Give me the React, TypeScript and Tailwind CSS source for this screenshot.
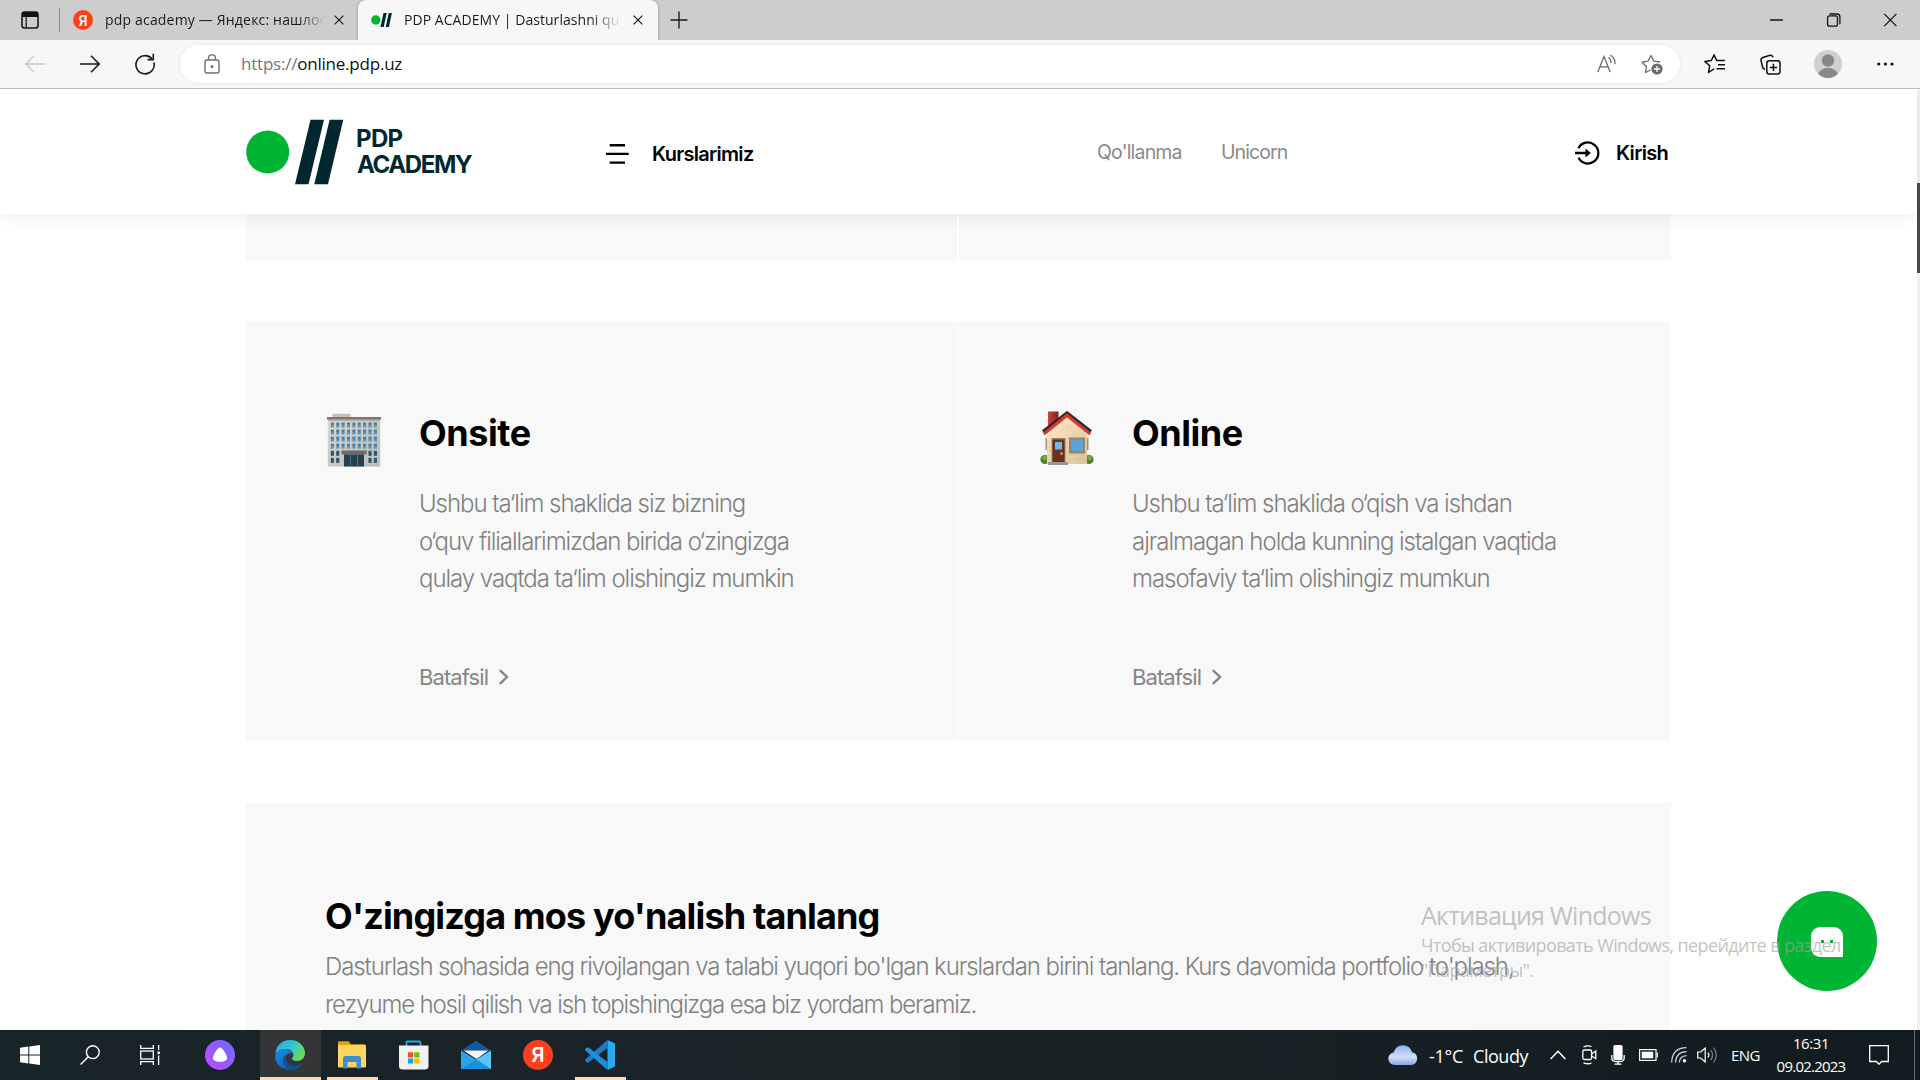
import React from "react";

const SEGOE = "font-['Open_Sans','Noto_Sans',sans-serif]";

function CloseIcon({ className = "" }: { className?: string }) {
  return (
    <svg viewBox="0 0 10 10" className={`h-[10px] w-[10px] shrink-0 ${className}`}>
      <path d="M.6.6 9.4 9.4M9.4.6.6 9.4" stroke="#1b1b1b" strokeWidth="1.2" fill="none" />
    </svg>
  );
}

function YandexIcon({ className }: { className: string }) {
  return (
    <span className={`flex shrink-0 items-center justify-center rounded-full bg-[#fc3f1d] font-['Inter',sans-serif] font-semibold text-white ${className}`}>
      Я
    </span>
  );
}

function TabBar() {
  return (
    <div className={`flex h-10 items-center bg-[#cdcdcd] text-[14px] text-[#1b1b1b] ${SEGOE}`}>
      <svg viewBox="0 0 18 18" className="ml-[21px] h-[18px] w-[18px] shrink-0">
        <rect x="1" y="1" width="16" height="16" rx="2.6" fill="none" stroke="#1b1b1b" strokeWidth="1.6" />
        <path d="M1 3.5Q1 1 3.500 1h11Q17 1 17 3.500V6H1z" fill="#111" />
        <path d="M5.200 6v11" stroke="#1b1b1b" strokeWidth="1.3" />
      </svg>
      <div className="ml-[20px] h-6 w-px shrink-0 bg-[#8a8a8a]" />
      <YandexIcon className="ml-[13px] h-5 w-5 text-[14px]" />
      <div className="mb-[2px] ml-[12px] w-[220px] overflow-hidden whitespace-nowrap tracking-[0.18px] [mask-image:linear-gradient(to_right,black_88%,transparent)]">
        pdp academy — Яндекс: нашлось
      </div>
      <CloseIcon className="ml-[9px]" />
      <div className="ml-[14px] flex h-10 w-[300px] shrink-0 items-center rounded-t-[8px] bg-[#f7f7f7] shadow-[0_0_3px_rgba(0,0,0,0.3)]">
        <svg viewBox="0 0 21 14" className="ml-[13px] h-[14px] w-[21px] shrink-0">
          <circle cx="4.800" cy="7" r="4.700" fill="#00b533" />
          <path d="M12.500 0h3.200l-3 14H9.500zM17.700 0h3.200l-3 14h-3.200z" fill="#00282e" />
        </svg>
        <div className="mb-[2px] ml-[12px] w-[217px] overflow-hidden whitespace-nowrap tracking-[0.05px] [mask-image:linear-gradient(to_right,black_86%,transparent)]">
          PDP ACADEMY | Dasturlashni qulay
        </div>
        <CloseIcon className="ml-[12px]" />
      </div>
      <svg viewBox="0 0 18 18" className="ml-[12px] h-[18px] w-[18px] shrink-0">
        <path d="M9 .5v17M.5 9h17" stroke="#1b1b1b" strokeWidth="1.400" />
      </svg>
      <svg viewBox="0 0 130 14" className="mr-[22px] ml-auto h-[14px] w-[128px] shrink-0" fill="none" stroke="#111" strokeWidth="1.300">
        <path d="M0 7h13M116 .8l12.400 12.400M128.400.8 116 13.200" />
        <rect x="58.500" y="2.800" width="10" height="10.400" rx="2" />
        <path d="M60.500.9h7.500q3 0 3 3v7.500" />
      </svg>
    </div>
  );
}

function Toolbar() {
  return (
    <div className={`relative flex h-[49px] items-center border-b border-[#bdbdbd] bg-[#f7f7f7] ${SEGOE}`}>
      <svg viewBox="0 0 20 18" className="ml-[25px] h-[18px] w-5 shrink-0" fill="none" stroke="#c9c9c9" strokeWidth="1.400">
        <path d="M20 9H1M9 .8.900 9 9 17.200" />
      </svg>
      <svg viewBox="0 0 20 18" className="ml-[35px] h-[18px] w-5 shrink-0" fill="none" stroke="#1b1b1b" strokeWidth="1.500">
        <path d="M0 9h19M11 .8 19.100 9 11 17.200" />
      </svg>
      <svg viewBox="0 0 20 22" className="ml-[35px] h-[22px] w-5 shrink-0" fill="none" stroke="#1b1b1b" strokeWidth="1.600">
        <path d="M18.900 9.500A9.100 9.100 0 1 1 16.800 5.600M18.300.8V6.600H12.500" />
      </svg>
      <div className="ml-[25px] flex h-[38px] w-[1500px] shrink-0 items-center rounded-full bg-white shadow-[0_0_4px_rgba(0,0,0,0.08)]">
        <svg viewBox="0 0 16 20" className="ml-[24px] h-5 w-4 shrink-0" fill="none" stroke="#6e6e6e" strokeWidth="1.400">
          <rect x="1" y="6" width="14" height="13" rx="2" />
          <path d="M4.500 6V4.200Q4.500.900 8 .900t3.500 3.300V6" />
          <circle cx="8" cy="12.500" r=".8" fill="#6e6e6e" />
        </svg>
        <div className="ml-[21px] text-[17px] tracking-[-0.22px] whitespace-nowrap text-[#111]">
          <span className="text-[#767676]">https://</span>online.pdp.uz
        </div>
        <svg viewBox="0 0 20 20" className="mr-[24px] ml-auto h-5 w-5 shrink-0" fill="none" stroke="#6b6b6b" strokeWidth="1.300">
          <path d="M.8 18 7 2.500 13.200 18M3 12.800h8M11.500 3.200q2.700 2 2.600 5.800M13.500 1q5 3.500 4.500 9" />
        </svg>
        <svg viewBox="0 0 22 22" className="mr-[17px] h-[22px] w-[22px] shrink-0" fill="none" stroke="#6b6b6b" strokeWidth="1.300" strokeLinejoin="round">
          <path d="M9.500 17 4.500 19.500l1-6L1 9.200l6-1L10 2.500l3 5.700 6 .8" />
          <circle cx="16" cy="16" r="5.600" fill="#6b6b6b" stroke="none" />
          <path d="M16 13v6M13 16h6" stroke="#fff" />
        </svg>
      </div>
      <svg viewBox="0 0 22 20" className="ml-[24px] h-5 w-[22px] shrink-0" fill="none" stroke="#111" strokeWidth="1.500" strokeLinejoin="round">
        <path d="M10 14.800 4.500 18.500l1.200-6.700L.9 7.400l6.400-.9L10.100.9l2.500 5.600h8.300M14 10.800h7M12.500 14.800H21" />
      </svg>
      <svg viewBox="0 0 21 21" className="ml-[34px] h-[21px] w-[21px] shrink-0" fill="none" stroke="#111" strokeWidth="1.500">
        <path d="M5 15.500Q3 15 2.600 13L1 6.500Q.6 4.200 2.800 3.500L10 1.300q2.300-.5 3 2" />
        <rect x="6.800" y="6.800" width="13.200" height="13.200" rx="2.600" />
        <path d="M13.400 9.800v7.200M9.800 13.400h7.200" />
      </svg>
      <svg viewBox="0 0 28 28" className="ml-[33px] h-7 w-7 shrink-0">
        <circle cx="14" cy="14" r="14" fill="#d2d0ce" />
        <circle cx="14" cy="10.500" r="6.200" fill="#8a8886" />
        <path d="M4 23.700Q7 18 14 18t10 5.700A14 14 0 0 1 4 23.700z" fill="#8a8886" />
      </svg>
      <svg viewBox="0 0 17 4" className="ml-[35px] h-1 w-[17px] shrink-0" fill="#111">
        <circle cx="1.800" cy="2" r="1.600" /><circle cx="8.400" cy="2" r="1.600" /><circle cx="15" cy="2" r="1.600" />
      </svg>
    </div>
  );
}

function SiteHeader() {
  return (
    <header className="relative z-10 flex h-[125px] w-[1917px] items-center bg-white pl-[246px] shadow-[0_4px_16px_rgba(0,0,0,0.06)]">
      <svg viewBox="0 0 98 66" className="h-[66px] w-[98px] shrink-0">
        <circle cx="21.700" cy="33" r="21.500" fill="#00b533" />
        <path d="M64.500.8h13.500L62.500 65.200H49zM83.600.8h13.700L82 65.200H68.300z" fill="#00282e" />
      </svg>
      <div className="ml-[12px] w-[130px] shrink-0 text-[24px] leading-[26px] font-bold text-[#00282e]">
        <div className="tracking-[-0.64px]">PDP</div>
        <div className="ml-[1px] tracking-[-1.37px]">ACADEMY</div>
      </div>
      <svg viewBox="0 0 23 20" className="mt-[5px] ml-[120px] h-5 w-[23px] shrink-0" stroke="#000" strokeWidth="2.400">
        <path d="M3.700 1.200h15.300M0 9.900h22.700M3.700 18.600h15.300" />
      </svg>
      <div className="mt-[5px] ml-[23px] w-[420px] text-[20px] font-[640] tracking-[-0.7px] text-black">Kurslarimiz</div>
      <div className="mt-[3px] ml-[25px] w-[124px] text-[19.5px] tracking-[-0.82px] text-[#8a8a8a]">Qo'llanma</div>
      <div className="mt-[3px] w-[354px] text-[19.5px] tracking-[-0.9px] text-[#8a8a8a]">Unicorn</div>
      <svg viewBox="0 0 25 24" className="mt-[3px] h-6 w-[25px] shrink-0" fill="none" stroke="#000" strokeWidth="2.300">
        <path d="M3.500 7.200A10.500 10.500 0 1 1 3.500 16.800M0 12h12" />
        <path d="M10.500 7.600 15.800 12l-5.300 4.400z" fill="#000" stroke="none" />
      </svg>
      <div className="mt-[2px] ml-[16px] text-[20px] font-[640] tracking-[-0.65px] text-black">Kirish</div>
    </header>
  );
}

function BuildingIcon() {
  const rows = [0, 1, 2, 3, 4, 5];
  const cols = [0, 1, 2, 3, 4, 5, 6, 7, 8];
  return (
    <svg viewBox="0 0 54 54" className="h-[54px] w-[54px] shrink-0">
      <defs>
        <linearGradient id="wall" x1="0" x2="1" y1="0" y2="1">
          <stop offset="0" stopColor="#dcd7d1" />
          <stop offset="1" stopColor="#b9bbbd" />
        </linearGradient>
        <linearGradient id="pane" x1="0" x2="0" y1="0" y2="1">
          <stop offset="0" stopColor="#3d7391" />
          <stop offset="1" stopColor="#70a6c2" />
        </linearGradient>
      </defs>
      <rect x="5.500" y=".8" width="18" height="4" fill="#c4bfba" />
      <rect x=".8" y="5" width="52.400" height="48.600" fill="url(#wall)" />
      <rect x="0" y="4" width="54" height="2.600" fill="#7d7572" />
      <rect x="1" y="6.600" width="52" height="1.200" fill="#aaa39f" />
      {rows.map((r) =>
        cols.map((c) =>
          r > 3 && c > 1 && c < 7 ? null : (
            <rect key={`${r}-${c}`} x={3.8 + c * 5.38} y={9.6 + r * 7.05} width="3.100" height="5" fill={r > 3 ? "#315468" : "url(#pane)"} />
          ),
        ),
      )}
      <rect x="14.500" y="37.500" width="25" height="4" fill="#6f6866" />
      <rect x="17" y="41.500" width="20" height="12" fill="#263f4e" />
      <path d="M23.500 42v11.500M30.500 42v11.500" stroke="#56707e" strokeWidth="1" />
    </svg>
  );
}

function HouseIcon() {
  return (
    <svg viewBox="0 0 54 54" className="h-[54px] w-[54px] shrink-0">
      <defs>
        <linearGradient id="siding" x1="0" x2="1" y1="0" y2="1">
          <stop offset="0" stopColor="#ffe9c4" />
          <stop offset="1" stopColor="#dcc49c" />
        </linearGradient>
        <linearGradient id="chimney" x1="0" x2="1">
          <stop offset="0" stopColor="#d0433c" />
          <stop offset="1" stopColor="#7f211e" />
        </linearGradient>
      </defs>
      <circle cx="5" cy="48.500" r="4.600" fill="#4d8227" />
      <circle cx="49" cy="48.500" r="4.600" fill="#4d8227" />
      <circle cx="4.600" cy="47" r="2.400" fill="#73a83f" />
      <circle cx="49.600" cy="47" r="2.400" fill="#73a83f" />
      <rect x="5.500" y="27" width="43" height="12" fill="#a08f7b" />
      <rect x="8" y=".5" width="10.500" height="14" fill="url(#chimney)" />
      <path d="M7 23 27 4l20 19v30H7z" fill="url(#siding)" />
      <path d="M7 32h40M7 36h40M7 40h40M7 44h40M7 48h40M10 28h34" stroke="#cdb48b" strokeWidth=".4" />
      <path d="M3 20.500 27 1.800 51 20.500" fill="none" stroke="#2d2626" strokeWidth="3" />
      <path d="M3.800 23 27 4.200 50.200 23" fill="none" stroke="#d33a33" strokeWidth="3.200" />
      <rect x="11.500" y="27" width="14" height="24.500" fill="#9d8268" />
      <rect x="12.500" y="28.500" width="12" height="23" fill="#6c3020" />
      <rect x="15" y="31" width="7" height="7.500" fill="#72b9e2" />
      <circle cx="21.500" cy="42.500" r="1.200" fill="#e9b654" />
      <rect x="29" y="26.500" width="16" height="16" fill="#9d8268" />
      <rect x="31" y="28.500" width="12" height="11.500" fill="#5fa3d6" />
      <rect x="8" y="51" width="20" height="3" fill="#9b948c" />
    </svg>
  );
}

function FormatCard({ icon, title, lines, className }: { icon: React.ReactNode; title: string; lines: string[]; className: string }) {
  return (
    <section className={`flex h-[418px] shrink-0 bg-[#f8f8f8] ${className}`}>
      {icon}
      <div className="pt-[86px]">
        <h2 className="text-[36px] leading-[50px] font-[660] tracking-[-0.45px] text-black">{title}</h2>
        <div className="mt-[27px] text-[24px] leading-[37.500px] font-[340] tracking-[-1.045px] whitespace-nowrap text-[#808080]">
          {lines.map((line) => (
            <div key={line}>{line}</div>
          ))}
        </div>
        <div className="mt-[64px] flex items-center text-[22px] leading-[30px] tracking-[-0.91px] text-[#858585]">
          Batafsil
          <svg viewBox="0 0 10 16" className="ml-[11px] h-4 w-[10px]" fill="none" stroke="#858585" strokeWidth="2.400" strokeLinecap="round">
            <path d="M1.600 1.800 8 8l-6.400 6.200" />
          </svg>
        </div>
      </div>
    </section>
  );
}

function ChatButton() {
  return (
    <div className="absolute top-[891px] left-[1777px] flex h-[100px] w-[100px] items-center justify-center rounded-full bg-[#00b533]">
      <div className="mt-[2px] flex h-[30px] w-8 justify-center gap-[6px] rounded-[9px] rounded-br-none bg-white pt-[13px]">
        <span className="h-[3px] w-[3px] bg-[#00b533]" />
        <span className="h-[3px] w-[3px] bg-[#00b533]" />
      </div>
    </div>
  );
}

function ActivationNotice() {
  return (
    <div className={`absolute top-[898px] left-[1421px] whitespace-nowrap text-[#a0a0a0]/65 ${SEGOE}`}>
      <div className="text-[25px] leading-[34px] tracking-[-0.77px]">Активация Windows</div>
      <div className="mt-[1px] text-[18px] leading-[25px] tracking-[-0.62px]">
        <div>Чтобы активировать Windows, перейдите в раздел</div>
        <div>"Параметры".</div>
      </div>
    </div>
  );
}

function Taskbar() {
  return (
    <footer className={`flex h-[50px] items-center bg-linear-to-r from-[#17242a] via-[#1b2226] to-[#111c20] text-white ${SEGOE}`}>
      <svg viewBox="0 0 20 20" className="ml-[20px] h-5 w-5 shrink-0" fill="#fff">
        <path d="M0 2.800 8.300 1.600V9.500H0zM9.300 1.500 20 0v9.500H9.300zM0 10.500h8.300v7.900L0 17.200zM9.300 10.500H20V20L9.300 18.500z" />
      </svg>
      <svg viewBox="0 0 20 20" className="ml-10 h-5 w-5 shrink-0" fill="none" stroke="#fff" strokeWidth="1.400">
        <circle cx="12.800" cy="7.200" r="6.400" /><path d="M8.300 11.800.6 19.400" />
      </svg>
      <svg viewBox="0 0 20 20" className="ml-10 h-5 w-5 shrink-0" fill="none" stroke="#fff" strokeWidth="1.300">
        <path d="M.7 0v3.300h12.600V0M.7 20v-3.300h12.600V20M18.600 0v5M18.600 10.500V20" />
        <rect x=".7" y="6" width="12.600" height="8" />
        <rect x="17.600" y="6.500" width="2.200" height="2.600" fill="#fff" stroke="none" />
      </svg>
      <svg viewBox="0 0 30 30" className="ml-[45px] h-[30px] w-[30px] shrink-0">
        <defs><linearGradient id="alice" x1="0" y1="1" x2="1" y2="0"><stop offset="0" stopColor="#c14bff" /><stop offset="1" stopColor="#6a6cff" /></linearGradient></defs>
        <circle cx="15" cy="15" r="15" fill="url(#alice)" />
        <path d="M15 7.500c2.500 0 7 7.500 7 10.500 0 2.600-3 3.800-7 3.800s-7-1.200-7-3.800c0-3 4.500-10.500 7-10.500z" fill="#fff" />
      </svg>
      <div className="ml-[25px] flex h-[50px] w-[61px] shrink-0 items-center justify-center border-b-[3px] border-[#ffd8b4] bg-[#333536] pt-[3px] pr-[2px]">
        <svg viewBox="0 0 30 30" className="h-[30px] w-[30px]">
          <defs>
            <linearGradient id="edgeTop" x1="0" x2="1" y1=".2" y2=".6"><stop offset="0" stopColor="#2aa9e8" /><stop offset=".5" stopColor="#2fc7cf" /><stop offset="1" stopColor="#6bdf4f" /></linearGradient>
            <linearGradient id="edgeLow" x1="0" x2="1" y1="0" y2="1"><stop offset="0" stopColor="#1a8fe0" /><stop offset="1" stopColor="#0b4ea2" /></linearGradient>
          </defs>
          <path d="M.3 14C1 5 7.500 0 15 0c9 0 15 6.300 15 13 0 5-3.700 8-8 8-3.300 0-5-1.300-5-2.300 0-1 1.400-1.500 1.400-4 0-3-3-5.700-7-5.700C6.500 9 2 11 .3 14z" fill="url(#edgeTop)" />
          <path d="M.2 15.500C1 11 5.500 8.800 10.500 8.900c4.500.1 7.800 2.600 7.900 5.600-2-2.500-7-1.500-7.600 3-.5 5 4 9.500 10 8.500 3-.5 5-1.600 6.600-3C25.500 26.500 21 30 15 30 6.500 30-.6 23.500.2 15.500z" fill="url(#edgeLow)" />
          <path d="M10.800 17.500c-.5 5 4 9.500 10 8.500 3-.5 5-1.600 6.600-3-2 4-6.400 7-12 7-4.500-1-8.500-7-7-12 .8-2.500 3-4.500 5.600-4.600-1.700.6-3 2-3.200 4.100z" fill="#0c4f9f" />
        </svg>
      </div>
      <div className="ml-[6px] flex h-[50px] w-[51px] shrink-0 items-center justify-center border-b-[3px] border-[#ffd8b4] pt-[2px] pr-[1px]">
        <svg viewBox="0 0 28 28" className="h-7 w-7">
          <path d="M0 3V1.500Q0 .300 1.200.300h9.300l2.500 3H27v4H0z" fill="#e0a010" />
          <rect y="4" width="28" height="22.500" rx="1" fill="#ffd560" />
          <path d="M5 27.500V17.500Q5 15 7.500 15h13q2.500 0 2.500 2.500v10h-4.500V21h-9v6.500z" fill="#3d8fd1" />
        </svg>
      </div>
      <svg viewBox="0 0 30 30" className="ml-[21px] h-[30px] w-[30px] shrink-0">
        <path d="M7.500 6V2.500Q7.500 1.500 8.500 1.500h12q1 0 1 1V6" fill="none" stroke="#28a9ea" strokeWidth="1.800" />
        <path d="M0 5.500h29.500V26q0 3.500-3.500 3.500H3.500Q0 29.500 0 26z" fill="#f2f2f2" />
        <path d="M9 12.300h5.200v5.200H9z" fill="#f25022" /><path d="M15.200 12.300h5.200v5.200h-5.200z" fill="#7fba00" /><path d="M9 18.500h5.200v5H9z" fill="#00a4ef" /><path d="M15.200 18.500h5.200v5h-5.200z" fill="#ffb900" />
      </svg>
      <svg viewBox="0 0 30 28" className="ml-[32px] h-7 w-[30px] shrink-0">
        <path d="M0 9.500 15 0l15 9.500z" fill="#0f5ba8" />
        <path d="M0 9.500 15.500 19 30 28H0z" fill="#2aa5ea" />
        <path d="M30 9.500V28H0z" fill="#1b8ee0" />
        <path d="M30 9.500V28L15.500 18.500z" fill="#58c8f6" />
        <path d="M2.500 9.500h25L15.500 18z" fill="#f0f4f8" />
      </svg>
      <YandexIcon className="ml-[32px] h-[30px] w-[30px] text-[20px]" />
      <div className="ml-[22px] flex h-[50px] w-[51px] shrink-0 items-center justify-center border-b-[3px] border-[#ffd8b4] pt-[3px] pr-[2px]">
        <svg viewBox="0 0 30 30" className="h-[30px] w-[30px]">
          <path d="M22.500 0 30 3.500v23L22.500 30z" fill="#29a8ef" />
          <path d="M22.500 0v8L3.500 22.500Q2.500 23.200 1.500 22.300L.5 21.300q-1-1 0-2z" fill="#1a7dc4" />
          <path d="M22.500 30v-8L3.500 7.500Q2.500 6.800 1.500 7.700L.5 8.700q-1 1 0 2z" fill="#1f8fdb" />
        </svg>
      </div>

      <svg viewBox="0 0 30 20" className="ml-auto h-5 w-[30px] shrink-0">
        <defs><linearGradient id="cloud" x1="0" y1="0" x2="0" y2="1"><stop offset="0" stopColor="#8fb0f0" /><stop offset=".6" stopColor="#cfdff8" /><stop offset="1" stopColor="#88a6e4" /></linearGradient></defs>
        <path d="M6.500 20A6.300 6.300 0 0 1 5.500 7.500Q8 .2 15 .2t9 7A6.500 6.500 0 0 1 23.500 20z" fill="url(#cloud)" />
      </svg>
      <div className="mt-[2px] ml-[11px] w-[44px] text-[18px] tracking-[-0.27px]">-1°C</div>
      <div className="mt-[2px] w-[77px] text-[18px] tracking-[-0.45px]">Cloudy</div>
      <svg viewBox="0 0 16 10" className="h-[10px] w-4 shrink-0" fill="none" stroke="#fff" strokeWidth="1.500"><path d="M.6 9 8 1.300 15.400 9" /></svg>
      <svg viewBox="0 0 15 20" className="ml-[16px] h-5 w-[15px] shrink-0" fill="none" stroke="#fff" strokeWidth="1.300">
        <rect x=".8" y="5" width="8.800" height="9.500" rx="1.500" /><path d="M9.600 9 13.800 6v7.500L9.600 11M1.500 2Q5 .2 9.500 1.500M1.500 17.800q4 1.700 8 .4" />
      </svg>
      <svg viewBox="0 0 14 20" className="ml-[14px] h-5 w-[14px] shrink-0" fill="none" stroke="#fff" strokeWidth="1.300">
        <rect x="2.400" y="0" width="9.200" height="15" rx="1.500" fill="#fff" stroke="none" /><path d="M.8 10v2.500q0 4 4 4h4.400q4 0 4-4V10M7 16.500V19M3.500 19.200h7" />
      </svg>
      <svg viewBox="0 0 19 12" className="ml-[14px] h-3 w-[19px] shrink-0" fill="none" stroke="#fff" strokeWidth="1.200">
        <rect x=".6" y=".6" width="16.400" height="10.800" /><rect x="2.700" y="2.700" width="11.500" height="6.600" fill="#fff" stroke="none" /><path d="M18.300 3.500v5" />
      </svg>
      <svg viewBox="0 0 16 16" className="ml-[13px] h-4 w-4 shrink-0" fill="none" stroke="#fff" strokeWidth="1.200">
        <path d="M.7 15.500Q1 1 15.500.7M4.500 15.500Q5 5 15.500 4.600M8.300 15.500q.3-6.500 7.200-6.900" opacity=".8" /><circle cx="13.500" cy="13.800" r="1.700" fill="#fff" stroke="none" />
      </svg>
      <svg viewBox="0 0 21 18" className="ml-[10px] h-[18px] w-[21px] shrink-0" fill="none" stroke="#fff" strokeWidth="1.200">
        <path d="M.7 6v6h3l4.500 4V2L3.700 6zM11 6.500q1.800 2.500 0 5" /><path d="M13.800 4q3.500 5 0 10M16.500 1.500q5.500 7.500 0 15" opacity=".45" />
      </svg>
      <div className="ml-[13px] w-[40px] text-[15px] tracking-[-0.56px]">ENG</div>
      <div className="w-[80px] text-center text-[15px] leading-[23px]">
        <div className="tracking-[-0.42px]">16:31</div>
        <div className="tracking-[-0.77px]">09.02.2023</div>
      </div>
      <svg viewBox="0 0 20 20" className="ml-[18px] h-5 w-5 shrink-0" fill="none" stroke="#fff" strokeWidth="1.300">
        <path d="M.7.7h18.600v15.800h-6.600L10 19.200 7.300 16.500H.7z" />
      </svg>
      <div className="mr-[5px] ml-[25px] h-full w-px bg-[#6a7276]" />
    </footer>
  );
}

export default function App() {
  return (
    <div className="relative flex h-[1080px] w-[1920px] flex-col overflow-hidden bg-white font-['Inter',sans-serif]">
      <TabBar />
      <Toolbar />
      <div className="flex h-[941px] overflow-hidden">
        <main className="w-[1917px] shrink-0">
          <SiteHeader />
          <div className="flex gap-[2px] pl-[246px]">
            <div className="h-[46px] w-[711px] bg-[#f8f8f8]" />
            <div className="h-[46px] w-[712px] bg-[#f8f8f8]" />
          </div>
          <div className="mt-[62px] flex gap-px pl-[246px]">
            <FormatCard
              className="w-[712px] pl-[81px]"
              icon={<div className="mr-[38px] pt-[91px]"><BuildingIcon /></div>}
              title="Onsite"
              lines={["Ushbu ta‘lim shaklida siz bizning", "o‘quv filiallarimizdan birida o‘zingizga", "qulay vaqtda ta‘lim olishingiz mumkin"]}
            />
            <FormatCard
              className="w-[711px] pl-[81px]"
              icon={<div className="mr-[38px] pt-[89px]"><HouseIcon /></div>}
              title="Online"
              lines={["Ushbu ta‘lim shaklida o‘qish va ishdan", "ajralmagan holda kunning istalgan vaqtida", "masofaviy ta‘lim olishingiz mumkun"]}
            />
          </div>
          <section className="mt-[63px] ml-[246px] h-[240px] w-[1425px] bg-[#f8f8f8] pt-[88px] pl-[79px] whitespace-nowrap">
            <h2 className="text-[36px] leading-[50px] font-[660] tracking-[-0.86px] text-black">O'zingizga mos yo'nalish tanlang</h2>
            <div className="mt-[7px] text-[24px] leading-[38px] font-[340] text-[#808080]">
              <div className="tracking-[-1.085px]">
                Dasturlash sohasida eng rivojlangan va talabi yuqori bo'lgan kurslardan birini tanlang. Kurs davomida portfolio to'plash,
              </div>
              <div className="tracking-[-1.165px]">rezyume hosil qilish va ish topishingizga esa biz yordam beramiz.</div>
            </div>
          </section>
        </main>
        <div className="h-full w-[3px] bg-[#f0f0f0] pt-[94px]">
          <div className="h-[90px] bg-[#444c50]" />
        </div>
      </div>
      <Taskbar />
      <ChatButton />
      <ActivationNotice />
    </div>
  );
}
